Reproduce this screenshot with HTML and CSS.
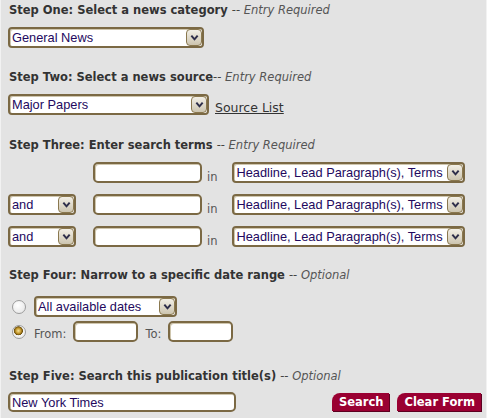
FILE: index.html
```html
<!DOCTYPE html>
<html lang="en">
<head>
  <meta charset="UTF-8">
  <title>News Search</title>
  <link rel="stylesheet" href="styles.css">
</head>
<body>

<form class="search-form">

  <div class="step step-one">
    <h3>Step One: Select a news category <span class="note">-- <em>Entry Required</em></span></h3>
    <div class="sel w-cat">
      <select><option>General News</option></select>
      <span class="arrow"><svg viewBox="0 0 10 10" width="9" height="9"><path d="M1.5 3 L5 7 L8.5 3" fill="none" stroke="#2e2e4a" stroke-width="2.2"/></svg></span>
    </div>
  </div>

  <div class="step step-two">
    <h3>Step Two: Select a news source<span class="note">-- <em>Entry Required</em></span></h3>
    <div class="row">
      <div class="sel w-src">
        <select><option>Major Papers</option></select>
        <span class="arrow"><svg viewBox="0 0 10 10" width="9" height="9"><path d="M1.5 3 L5 7 L8.5 3" fill="none" stroke="#2e2e4a" stroke-width="2.2"/></svg></span>
      </div>
      <a href="#" class="src-link">Source List</a>
    </div>
  </div>

  <div class="step step-three">
    <h3>Step Three: Enter search terms <span class="note">-- <em>Entry Required</em></span></h3>
    <div class="terms">
      <div class="term-row">
        <span class="bool-spacer"></span>
        <input type="text" class="txt w-term">
        <span class="lbl in">in</span>
        <div class="sel w-field">
          <select><option>Headline, Lead Paragraph(s), Terms</option></select>
          <span class="arrow"><svg viewBox="0 0 10 10" width="9" height="9"><path d="M1.5 3 L5 7 L8.5 3" fill="none" stroke="#2e2e4a" stroke-width="2.2"/></svg></span>
        </div>
      </div>
      <div class="term-row">
        <div class="sel w-bool">
          <select><option>and</option></select>
          <span class="arrow"><svg viewBox="0 0 10 10" width="9" height="9"><path d="M1.5 3 L5 7 L8.5 3" fill="none" stroke="#2e2e4a" stroke-width="2.2"/></svg></span>
        </div>
        <input type="text" class="txt w-term">
        <span class="lbl in">in</span>
        <div class="sel w-field">
          <select><option>Headline, Lead Paragraph(s), Terms</option></select>
          <span class="arrow"><svg viewBox="0 0 10 10" width="9" height="9"><path d="M1.5 3 L5 7 L8.5 3" fill="none" stroke="#2e2e4a" stroke-width="2.2"/></svg></span>
        </div>
      </div>
      <div class="term-row">
        <div class="sel w-bool">
          <select><option>and</option></select>
          <span class="arrow"><svg viewBox="0 0 10 10" width="9" height="9"><path d="M1.5 3 L5 7 L8.5 3" fill="none" stroke="#2e2e4a" stroke-width="2.2"/></svg></span>
        </div>
        <input type="text" class="txt w-term">
        <span class="lbl in">in</span>
        <div class="sel w-field">
          <select><option>Headline, Lead Paragraph(s), Terms</option></select>
          <span class="arrow"><svg viewBox="0 0 10 10" width="9" height="9"><path d="M1.5 3 L5 7 L8.5 3" fill="none" stroke="#2e2e4a" stroke-width="2.2"/></svg></span>
        </div>
      </div>
    </div>
  </div>

  <div class="step step-four">
    <h3>Step Four: Narrow to a specific date range <span class="note">-- <em>Optional</em></span></h3>
    <div class="dates">
      <div class="date-row">
        <input type="radio" name="dr" class="radio">
        <div class="sel w-date">
          <select><option>All available dates</option></select>
          <span class="arrow"><svg viewBox="0 0 10 10" width="9" height="9"><path d="M1.5 3 L5 7 L8.5 3" fill="none" stroke="#2e2e4a" stroke-width="2.2"/></svg></span>
        </div>
      </div>
      <div class="date-row">
        <input type="radio" name="dr" class="radio" checked>
        <span class="lbl">From:</span>
        <input type="text" class="txt w-day">
        <span class="lbl to">To:</span>
        <input type="text" class="txt w-day">
      </div>
    </div>
  </div>

  <div class="step step-five">
    <h3>Step Five: Search this publication title(s) <span class="note">-- <em>Optional</em></span></h3>
    <div class="row bottom-row">
      <input type="text" class="txt w-pub" value="New York Times">
      <div class="buttons">
        <button type="submit" class="btn">Search</button>
        <button type="reset" class="btn">Clear Form</button>
      </div>
    </div>
  </div>

</form>

</body>
</html>
```

FILE: styles.css
```css
body {
  margin: 0;
  background-color: #e3e3e3;
  font-family: "DejaVu Sans", Verdana, sans-serif;
  color: #333;
}

.search-form {
  height: 418px;
  box-sizing: border-box;
  padding: 3px 6px 0 7px;
  border-left: 1px solid #f2f2f2;
  border-right: 1px solid #f2f2f2;
}

h3 {
  margin: 0 0 10px 1px;
  font-size: 11.5px;
  line-height: 14px;
  font-weight: bold;
  color: #333;
  white-space: nowrap;
}

.note {
  font-weight: normal;
  color: #444;
}

.note em {
  color: #555;
}

.step-two { margin-top: 22px; }
.step-three { margin-top: 23px; }
.step-four { margin-top: 21px; }
.step-four h3 { margin-bottom: 14px; }
.step-five { margin-top: 27px; }
.step-five h3 { margin-bottom: 9px; }

.row {
  display: flex;
  align-items: flex-end;
}

/* select boxes */
.sel {
  position: relative;
  height: 21px;
  flex: none;
}

.sel select {
  appearance: none;
  -webkit-appearance: none;
  width: 100%;
  height: 100%;
  margin: 0;
  padding: 0 16px 0 2px;
  border: 2px solid #7b6944;
  border-radius: 4px;
  background: #fff;
  box-shadow: inset 1px 1px 0 #cfc6ae;
  font-family: "Liberation Sans", Arial, sans-serif;
  font-size: 12.8px;
  color: #23095e;
  outline: none;
}

.arrow {
  position: absolute;
  right: 2px;
  top: 2px;
  width: 14px;
  height: 15px;
  border: 1px solid #8a784f;
  border-radius: 4px;
  background: linear-gradient(#f2efe6, #cdc5b0);
  display: flex;
  align-items: center;
  justify-content: center;
}

.w-cat { width: 196px; }
.w-src { width: 201px; }
.w-bool { width: 68px; }
.w-field { width: 233px; }
.w-date { width: 143px; }

.src-link {
  margin-left: 6px;
  font-size: 12.5px;
  line-height: 15px;
  color: #333;
}

/* text inputs */
.txt {
  box-sizing: border-box;
  height: 21px;
  margin: 0;
  padding: 0 2px;
  border: 2px solid #7b6944;
  border-radius: 5px;
  background: #fff;
  box-shadow: inset 1px 1px 0 #cfc6ae;
  font-family: "Liberation Sans", Arial, sans-serif;
  font-size: 12.8px;
  color: #23095e;
  outline: none;
  flex: none;
}

.w-term { width: 109px; }
.w-day { width: 65px; }
.w-pub { width: 228px; height: 20px; }

.lbl {
  font-size: 11.5px;
  color: #555;
  line-height: 14px;
}

/* search terms */
.terms {
  display: flex;
  flex-direction: column;
  gap: 11px;
}

.term-row {
  display: flex;
  align-items: flex-end;
}

.bool-spacer {
  width: 68px;
  flex: none;
}

.term-row .txt { margin-left: 17px; }

.in {
  margin: 0 15px 0 5px;
  position: relative;
  top: 1px;
}

/* dates */
.dates {
  display: flex;
  flex-direction: column;
  gap: 4px;
}

.date-row {
  display: flex;
  align-items: center;
}

.radio {
  appearance: none;
  -webkit-appearance: none;
  width: 14px;
  height: 14px;
  margin: 0 8px 0 4px;
  border: 1px solid #9c9c9c;
  border-radius: 50%;
  background: radial-gradient(circle at 40% 35%, #fff, #e2e2e2);
  flex: none;
}

.radio:checked {
  background: radial-gradient(circle at 45% 40%, #f6e39a 0, #c89c30 2.5px, #6e500c 4.2px, #f4f4f4 4.8px, #e4e4e4 100%);
}

.date-row .lbl { margin-right: 7px; position: relative; top: 2px; }
.date-row .to { margin-left: 7px; }

/* buttons */
.bottom-row {
  justify-content: space-between;
  align-items: center;
}

.buttons {
  display: flex;
  gap: 8px;
  margin-right: -1px;
}

.btn {
  height: 18px;
  padding: 0 6px 0 7px;
  border: none;
  border-radius: 8px 0 0 0;
  background-color: #9a0032;
  box-shadow: 1px 1px 0 #5c0020;
  color: #fff;
  font-family: "DejaVu Sans", Verdana, sans-serif;
  font-size: 11.5px;
  font-weight: bold;
  cursor: pointer;
}
```
